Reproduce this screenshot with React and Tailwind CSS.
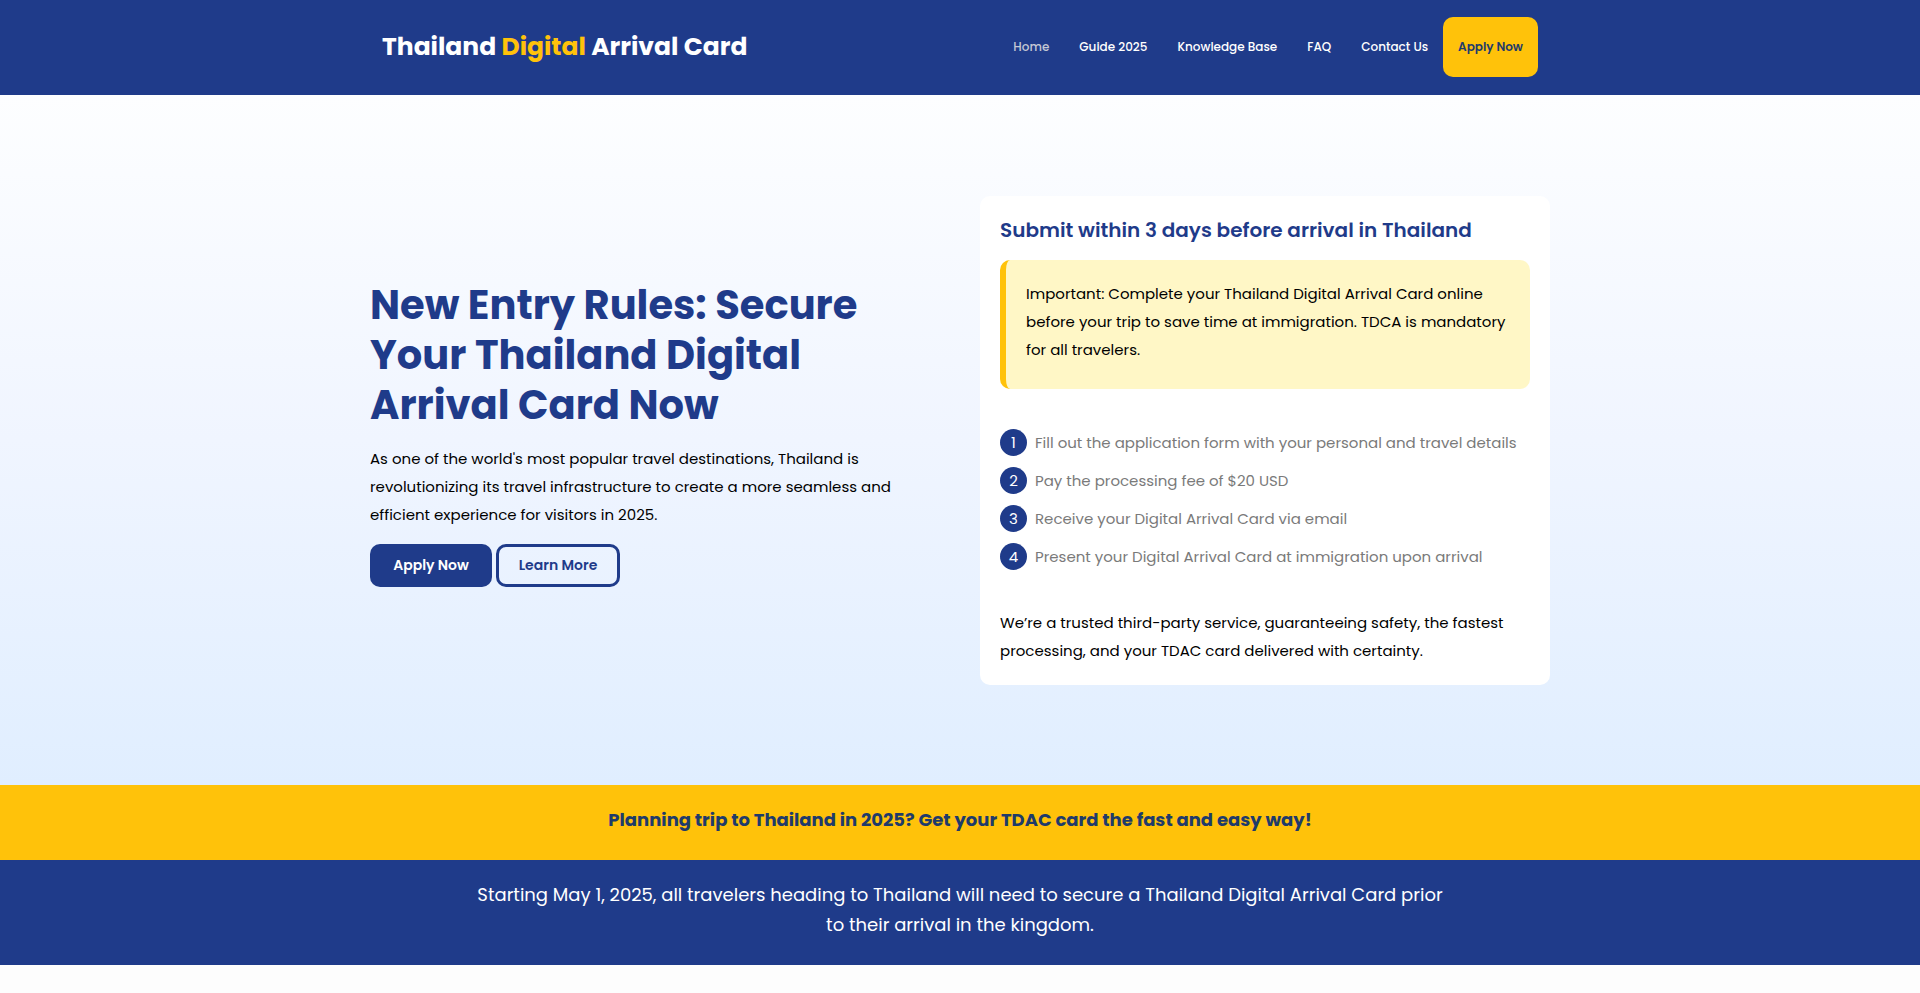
import React from 'react'

const navLinks = [
  { label: 'Home', href: '#home', active: true },
  { label: 'Guide 2025', href: '#guide' },
  { label: 'Knowledge Base', href: '#knowledge' },
  { label: 'FAQ', href: '#faq' },
  { label: 'Contact Us', href: '#contact' },
]

const steps = [
  'Fill out the application form with your personal and travel details',
  'Pay the processing fee of $20 USD',
  'Receive your Digital Arrival Card via email',
  'Present your Digital Arrival Card at immigration upon arrival',
]

function Header() {
  return (
    <header className="bg-[#1f3b8a] px-4 pt-[17px] pb-[18px]">
      <div className="mx-auto flex max-w-[1156px] items-center justify-between">
        <a href="#home" className="text-[25px] leading-10 font-bold whitespace-nowrap text-white">
          Thailand <span className="text-[#ffc20a]">Digital</span> Arrival Card
        </a>

        <nav className="flex items-center text-xs font-medium whitespace-nowrap">
          {navLinks.map((link) => (
            <a
              key={link.label}
              href={link.href}
              className={`px-[15px] leading-[60px] ${link.active ? 'text-[#c4c8d4]' : 'text-white'}`}
            >
              {link.label}
            </a>
          ))}
          <a href="#apply" className="rounded-[10px] bg-[#ffc20a] px-[15px] leading-[60px] font-semibold text-[#1f3b6a]">
            Apply Now
          </a>
        </nav>
      </div>
    </header>
  )
}

function Intro() {
  return (
    <div className="pb-[15px]">
      <h1 className="text-[40px] leading-[50px] font-bold text-[#1f3b8a]">
        New Entry Rules: Secure
        <br />
        Your Thailand Digital
        <br />
        Arrival Card Now
      </h1>
      <p className="mt-[15px] text-[15px] leading-7 text-black">
        As one of the world's most popular travel destinations, Thailand is
        <br />
        revolutionizing its travel infrastructure to create a more seamless and
        <br />
        efficient experience for visitors in 2025.
      </p>
      <div className="mt-[15px] flex gap-1 text-sm font-semibold">
        <button type="button" className="h-[43px] w-[122px] rounded-[10px] bg-[#1f3b8a] text-white">
          Apply Now
        </button>
        <button
          type="button"
          className="h-[43px] w-[124px] rounded-[10px] border-3 border-[#1f3b8a] text-[#1f3b8a]"
        >
          Learn More
        </button>
      </div>
    </div>
  )
}

function StepsCard() {
  return (
    <div className="rounded-[10px] bg-white p-5">
      <h2 className="text-xl leading-7 font-semibold text-[#1f3b8a]">Submit within 3 days before arrival in Thailand</h2>

      <div className="mt-4 rounded-[10px] border-l-6 border-[#ffc20a] bg-[#fff7c6] px-5 pt-5 pb-[25px]">
        <p className="text-[15px] leading-7 text-black">
          Important: Complete your Thailand Digital Arrival Card online
          <br />
          before your trip to save time at immigration. TDCA is mandatory
          <br />
          for all travelers.
        </p>
      </div>

      <ol className="mt-10 space-y-[11px]">
        {steps.map((step, i) => (
          <li key={step} className="flex items-center gap-2 text-[15px] leading-[27px] text-[#7a7a7a]">
            <span className="size-[27px] shrink-0 rounded-full bg-[#1f3b8a] text-center text-white">{i + 1}</span>
            {step}
          </li>
        ))}
      </ol>

      <p className="mt-[39px] text-[15px] leading-7 text-black">
        We’re a trusted third-party service, guaranteeing safety, the fastest
        <br />
        processing, and your TDAC card delivered with certainty.
      </p>
    </div>
  )
}

function App() {
  return (
    <div className="min-h-screen bg-[#fdfdfd] font-[Poppins,Inter,sans-serif]">
      <Header />

      <section className="bg-linear-to-b from-[#fdfeff] via-[#f0f5ff] to-[#e0eeff] px-4 pt-[101px] pb-[100px]">
        <div className="mx-auto grid max-w-[1180px] grid-cols-1 items-center gap-10 lg:grid-cols-2">
          <Intro />
          <StepsCard />
        </div>
      </section>

      <section className="bg-[#ffc20a] px-4 pt-5 pb-[25px] text-center">
        <h3 className="text-lg leading-[30px] font-bold text-[#1f3b6a]">
          Planning trip to Thailand in 2025? Get your TDAC card the fast and easy way!
        </h3>
      </section>

      <section className="bg-[#1f3b8a] px-4 pt-5 pb-[25px] text-center">
        <p className="text-lg leading-[30px] text-white">
          Starting May 1, 2025, all travelers heading to Thailand will need to secure a Thailand Digital Arrival Card prior
          <br />
          to their arrival in the kingdom.
        </p>
      </section>
    </div>
  )
}

export default App
